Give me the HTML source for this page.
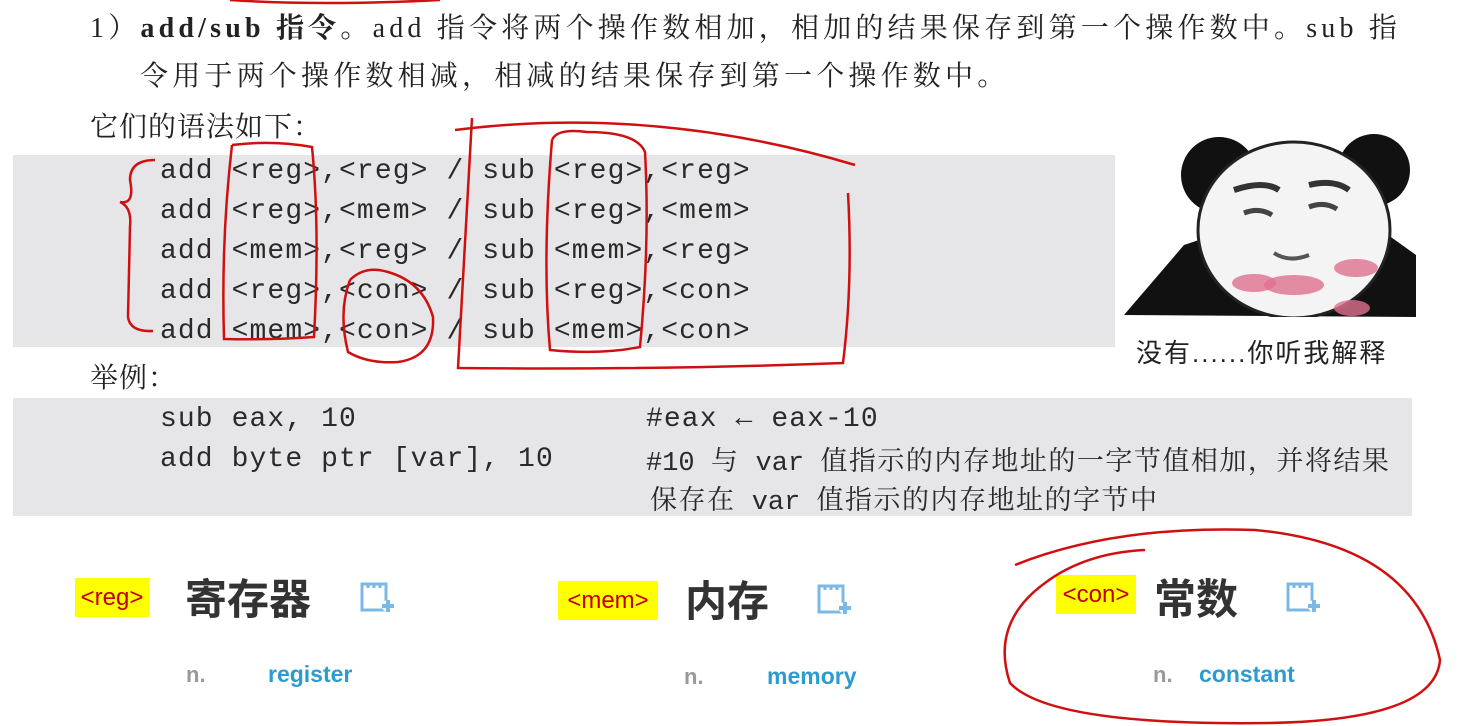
<!DOCTYPE html>
<html><head><meta charset="utf-8"><style>
body{margin:0;width:1461px;height:726px;background:#fff;position:relative;overflow:hidden;font-family:"Liberation Serif","Noto Serif CJK SC",serif;color:#222}
.a{position:absolute;white-space:pre}
.t{font-size:28px;line-height:30px;letter-spacing:4.2px}
.box{position:absolute;background:#e6e6e8}
.m{font-family:"Liberation Mono","Noto Sans CJK SC",monospace;font-size:28px;letter-spacing:1.1px;color:#2a2a2a;line-height:30px}
.y{position:absolute;background:#ffff00;color:#c00000;font-family:"Liberation Sans",sans-serif;font-size:24px;line-height:39px;text-align:center}
.w{position:absolute;font-family:"Liberation Sans","Noto Sans CJK SC",sans-serif;font-weight:bold;font-size:42px;color:#333;line-height:44px}
.n{position:absolute;font-family:"Liberation Sans",sans-serif;font-weight:bold;font-size:22px;color:#999}
.e{position:absolute;font-family:"Liberation Sans",sans-serif;font-weight:bold;font-size:23px;color:#2b9bd2}
.c{font-family:'Noto Serif CJK SC',serif;letter-spacing:1.5px}
</style></head><body>
<div class="a t" style="left:90px;top:14px">1）<b>add/sub 指令</b>。add 指令将两个操作数相加，相加的结果保存到第一个操作数中。sub 指</div>
<div class="a t" style="left:140px;top:62px">令用于两个操作数相减，相减的结果保存到第一个操作数中。</div>
<div class="a t" style="left:90px;top:113px;letter-spacing:1px">它们的语法如下：</div>
<div class="box" style="left:13px;top:155px;width:1102px;height:192px"></div>
<div class="a m" style="left:160px;top:157px">add &lt;reg&gt;,&lt;reg&gt; / sub &lt;reg&gt;,&lt;reg&gt;</div>
<div class="a m" style="left:160px;top:197px">add &lt;reg&gt;,&lt;mem&gt; / sub &lt;reg&gt;,&lt;mem&gt;</div>
<div class="a m" style="left:160px;top:237px">add &lt;mem&gt;,&lt;reg&gt; / sub &lt;mem&gt;,&lt;reg&gt;</div>
<div class="a m" style="left:160px;top:277px">add &lt;reg&gt;,&lt;con&gt; / sub &lt;reg&gt;,&lt;con&gt;</div>
<div class="a m" style="left:160px;top:317px">add &lt;mem&gt;,&lt;con&gt; / sub &lt;mem&gt;,&lt;con&gt;</div>
<div class="a t" style="left:90px;top:364px;letter-spacing:1px">举例：</div>
<div class="box" style="left:13px;top:398px;width:1399px;height:118px"></div>
<div class="a m" style="left:160px;top:405px">sub eax, 10</div>
<div class="a m" style="left:160px;top:445px">add byte ptr [var], 10</div>
<div class="a m" style="left:646px;top:405px">#eax ← eax-10</div>
<div class="a m" style="left:646px;top:444px;font-size:27px;letter-spacing:0">#10 <span class="c">与</span> var <span class="c">值指示的内存地址的一字节值相加，并将结果</span></div>
<div class="a m" style="left:650px;top:483px;font-size:27px;letter-spacing:0"><span class="c">保存在</span> var <span class="c">值指示的内存地址的字节中</span></div>

<svg class="a" style="left:1124px;top:125px" width="292" height="192" viewBox="0 0 292 192">
<rect width="292" height="192" fill="#fff"/>
<path d="M0 190 L60 120 L120 100 L250 100 L292 130 L292 192Z" fill="#111"/>
<circle cx="95" cy="50" r="38" fill="#111"/>
<circle cx="250" cy="45" r="36" fill="#111"/>
<ellipse cx="170" cy="105" rx="96" ry="88" fill="#f4f4f4" stroke="#222" stroke-width="3"/>
<path d="M110 65 q30-10 45 0 M185 60 q25-6 40 5" stroke="#333" stroke-width="6" fill="none"/>
<path d="M120 88 q15-6 28 2 M185 82 q15-6 28 2" stroke="#444" stroke-width="5" fill="none"/>
<path d="M150 128 q15 10 35 2" stroke="#555" stroke-width="4" fill="none"/>
<ellipse cx="130" cy="158" rx="22" ry="9" fill="#e07090" opacity=".8"/>
<ellipse cx="170" cy="160" rx="30" ry="10" fill="#e07090" opacity=".8"/>
<ellipse cx="232" cy="143" rx="22" ry="9" fill="#e07090" opacity=".8"/>
<ellipse cx="228" cy="183" rx="18" ry="8" fill="#e07090" opacity=".8"/>
</svg>
<div class="a" style="left:1136px;top:333px;font-family:'Liberation Sans','Noto Sans CJK SC',sans-serif;font-size:26px;letter-spacing:2px;color:#222">没有......你听我解释</div>

<div class="y" style="left:75px;top:578px;width:74px">&lt;reg&gt;</div>
<div class="w" style="left:185px;top:578px">寄存器</div>
<div class="y" style="left:558px;top:581px;width:100px">&lt;mem&gt;</div>
<div class="w" style="left:685px;top:580px">内存</div>
<div class="y" style="left:1056px;top:575px;width:80px">&lt;con&gt;</div>
<div class="w" style="left:1154px;top:578px">常数</div>
<svg class="a" style="left:360px;top:582px" width="36" height="32"><path d="M2 2h24v26H2z M8 2v4 M14 2v4 M20 2v4" stroke="#7cb8e6" stroke-width="3" fill="none"/><circle cx="28" cy="24" r="6" fill="#fff"/><path d="M28 18v12M22 24h12" stroke="#7cb8e6" stroke-width="4"/></svg>
<svg class="a" style="left:817px;top:584px" width="36" height="32"><path d="M2 2h24v26H2z M8 2v4 M14 2v4 M20 2v4" stroke="#7cb8e6" stroke-width="3" fill="none"/><circle cx="28" cy="24" r="6" fill="#fff"/><path d="M28 18v12M22 24h12" stroke="#7cb8e6" stroke-width="4"/></svg>
<svg class="a" style="left:1286px;top:582px" width="36" height="32"><path d="M2 2h24v26H2z M8 2v4 M14 2v4 M20 2v4" stroke="#7cb8e6" stroke-width="3" fill="none"/><circle cx="28" cy="24" r="6" fill="#fff"/><path d="M28 18v12M22 24h12" stroke="#7cb8e6" stroke-width="4"/></svg>
<div class="n" style="left:186px;top:662px">n.</div><div class="e" style="left:268px;top:661px">register</div>
<div class="n" style="left:684px;top:664px">n.</div><div class="e" style="left:767px;top:663px">memory</div>
<div class="n" style="left:1153px;top:662px">n.</div><div class="e" style="left:1199px;top:661px">constant</div>

<svg class="a" style="left:0;top:0" width="1461" height="726" fill="none" stroke="#d01010" stroke-width="2.5">
<path d="M230 0 q90 6 210 0"/>
<path d="M155 160 q-25 0-25 20 q5 25-10 22 q12 5 10 25 l-2 90 q2 15 25 14"/>
<path d="M232 145 q40-5 80 2 q8 80 2 190 q-40 3-90 2 q-3-100 8-194"/>
<path d="M350 280 q15-15 38-8 q35 10 45 45 q2 40-35 45 q-30 2-50-10 q-10-40 2-72"/>
<path d="M455 130 q200-25 400 35 M472 118 l-14 250 q200 2 385-5 q10-80 5-170"/>
<path d="M552 140 q5-12 35-8 q50 0 58 20 q5 90-5 195 q-40 8-90 3 q-8-90 2-210"/>
<path d="M1015 565 q100-40 240-35 q160 15 185 130 q-5 60-170 63 q-220 3-260-40 q-20-60 35-100 q40-30 100-33"/>
</svg>
</body></html>
